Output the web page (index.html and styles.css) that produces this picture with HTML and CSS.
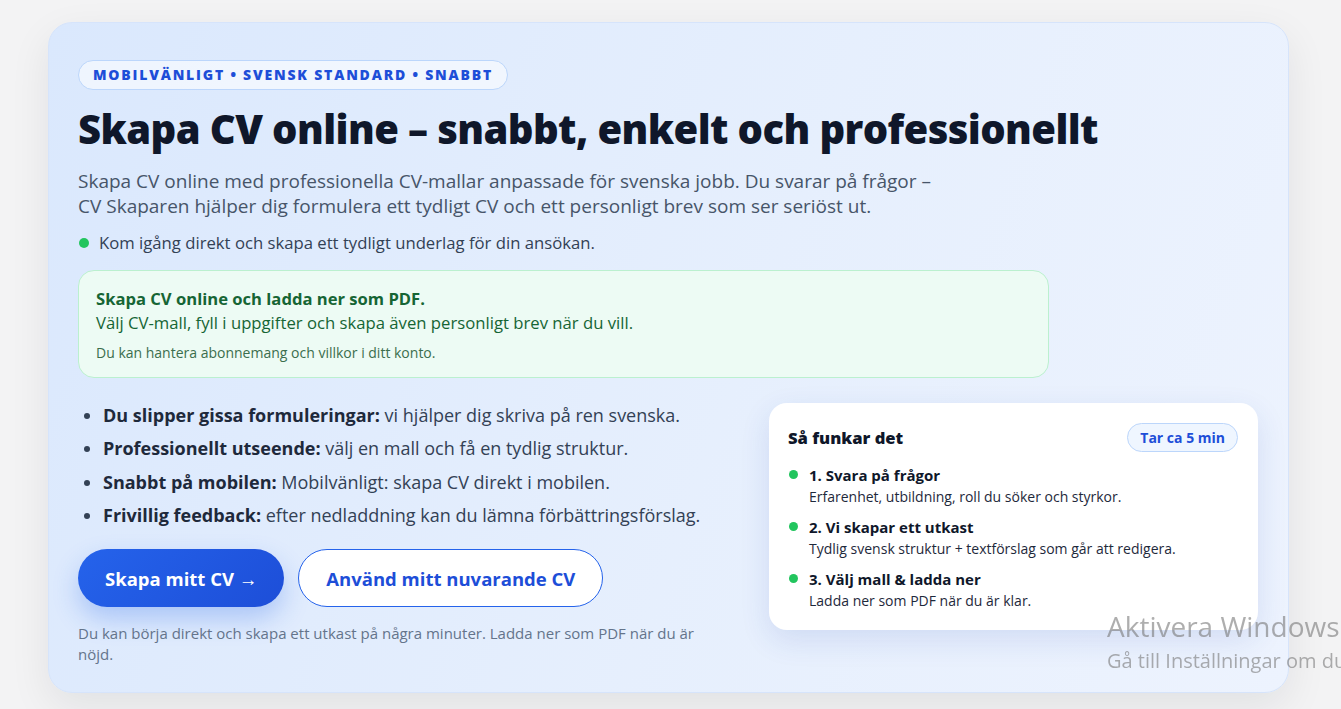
FILE: index.html
```html
<!DOCTYPE html>
<html lang="sv">
<head>
<meta charset="utf-8">
<title>Skapa CV online</title>
<link rel="stylesheet" href="styles.css">
</head>
<body>
<main class="hero">
  <div class="eyebrow">MOBILVÄNLIGT • SVENSK STANDARD • SNABBT</div>
  <h1 class="title">Skapa CV online – snabbt, enkelt och professionellt</h1>
  <p class="lead">Skapa CV online med professionella CV-mallar anpassade för svenska jobb. Du svarar på frågor – CV Skaparen hjälper dig formulera ett tydligt CV och ett personligt brev som ser seriöst ut.</p>
  <p class="status"><span class="dot"></span>Kom igång direkt och skapa ett tydligt underlag för din ansökan.</p>

  <div class="notice">
    <p class="notice-title">Skapa CV online och ladda ner som PDF.</p>
    <p class="notice-text">Välj CV-mall, fyll i uppgifter och skapa även personligt brev när du vill.</p>
    <p class="notice-small">Du kan hantera abonnemang och villkor i ditt konto.</p>
  </div>

  <div class="split">
    <div class="left">
      <ul class="benefits">
        <li><strong>Du slipper gissa formuleringar:</strong> vi hjälper dig skriva på ren svenska.</li>
        <li><strong>Professionellt utseende:</strong> välj en mall och få en tydlig struktur.</li>
        <li><strong>Snabbt på mobilen:</strong> Mobilvänligt: skapa CV direkt i mobilen.</li>
        <li><strong>Frivillig feedback:</strong> efter nedladdning kan du lämna förbättringsförslag.</li>
      </ul>
      <div class="actions">
        <a class="btn btn-primary" href="#">Skapa mitt CV →</a>
        <a class="btn btn-ghost" href="#">Använd mitt nuvarande CV</a>
      </div>
      <p class="hint">Du kan börja direkt och skapa ett utkast på några minuter. Ladda ner som PDF när du är nöjd.</p>
    </div>

    <aside class="how">
      <div class="how-head">
        <h2 class="how-title">Så funkar det</h2>
        <span class="pill">Tar ca 5 min</span>
      </div>
      <ol class="steps">
        <li class="step"><span class="dot"></span><div><p class="step-title">1. Svara på frågor</p><p class="step-text">Erfarenhet, utbildning, roll du söker och styrkor.</p></div></li>
        <li class="step"><span class="dot"></span><div><p class="step-title">2. Vi skapar ett utkast</p><p class="step-text">Tydlig svensk struktur + textförslag som går att redigera.</p></div></li>
        <li class="step"><span class="dot"></span><div><p class="step-title">3. Välj mall &amp; ladda ner</p><p class="step-text">Ladda ner som PDF när du är klar.</p></div></li>
      </ol>
    </aside>
  </div>
</main>

<div class="watermark">
  <div class="wm-big">Aktivera Windows</div>
  <div class="wm-small">Gå till Inställningar om du vill aktivera Windows.</div>
</div>
</body>
</html>
```

FILE: styles.css
```css
* { box-sizing: border-box; }
html, body { height: 100%; }
body {
  margin: 0;
  background: #f3f3f4;
  font-family: "Open Sans", "Noto Sans", sans-serif;
  color: #0f172a;
  overflow: hidden;
}
p { margin: 0; }

.hero {
  width: 1241px;
  margin: 22px 0 0 48px;
  padding: 37px 30px 27px 29px;
  border-radius: 24px;
  border: 1px solid #d6e4fb;
  background: linear-gradient(110deg, #dae8fd 0%, #e6effd 55%, #edf3fe 100%);
  box-shadow: 0 14px 40px rgba(15, 23, 42, 0.08);
}

.eyebrow {
  display: inline-block;
  padding: 5px 14px;
  border-radius: 999px;
  border: 1px solid #bcd6fb;
  background: rgba(255, 255, 255, 0.55);
  color: #1d4ed8;
  font-size: 14px;
  font-weight: 800;
  letter-spacing: 1.8px;
  line-height: 18px;
}

.title {
  margin: 14px 0 0;
  font-size: 40px;
  line-height: 50px;
  font-weight: 800;
  letter-spacing: -0.6px;
  color: #0f172a;
}

.lead {
  margin-top: 15px;
  max-width: 870px;
  font-size: 19px;
  line-height: 25px;
  color: #475569;
}

.status {
  margin-top: 13px;
  display: flex;
  align-items: center;
  gap: 10px;
  font-size: 16.7px;
  line-height: 22px;
  color: #334155;
}
.status .dot { margin-left: 1px; }

.dot {
  width: 10px;
  height: 10px;
  border-radius: 50%;
  background: #22c55e;
  flex: none;
}

.notice {
  margin-top: 16px;
  max-width: 971px;
  padding: 16px 17px 15px;
  border-radius: 16px;
  border: 1px solid #bbf0cf;
  background: #edfbf4;
}
.notice-title {
  font-size: 16.6px;
  font-weight: 700;
  line-height: 24px;
  color: #166534;
}
.notice-text {
  font-size: 16.7px;
  line-height: 24px;
  color: #166534;
}
.notice-small {
  margin-top: 8px;
  font-size: 14px;
  line-height: 19px;
  color: #3b6e4d;
}

.split {
  margin-top: 21px;
  display: grid;
  grid-template-columns: 1fr 489px;
  gap: 50px;
  align-items: start;
}

.benefits {
  margin: 0;
  padding-left: 25px;
  font-size: 18px;
  line-height: 33.3px;
  color: #334155;
}
.benefits strong { color: #1e293b; font-weight: 700; }

.actions {
  margin-top: 17px;
  display: flex;
  gap: 14px;
}
.btn {
  display: inline-flex;
  align-items: center;
  justify-content: center;
  height: 58px;
  padding: 0 27px;
  border-radius: 999px;
  font-size: 18.5px;
  font-weight: 700;
  text-decoration: none;
}
.btn-primary {
  background: linear-gradient(135deg, #2563eb, #1d4ed8);
  color: #ffffff;
  box-shadow: 0 12px 26px rgba(37, 99, 235, 0.28);
}
.btn-ghost {
  background: #ffffff;
  color: #1d4ed8;
  border: 1px solid #2563eb;
}

.hint {
  margin-top: 16px;
  font-size: 15px;
  line-height: 21px;
  color: #64748b;
}

.how {
  margin-top: 4px;
  padding: 20px 20px 19px 19px;
  border-radius: 18px;
  background: #ffffff;
  box-shadow: 0 10px 30px rgba(30, 64, 175, 0.12);
}
.how-head {
  display: flex;
  align-items: center;
  justify-content: space-between;
}
.how-title {
  margin: 0;
  font-size: 16.6px;
  font-weight: 800;
  color: #0f172a;
}
.pill {
  padding: 4px 12px;
  border-radius: 999px;
  border: 1px solid #bcd6fb;
  background: #eff6ff;
  color: #1d4ed8;
  font-size: 14px;
  font-weight: 700;
  line-height: 19px;
}

.steps {
  list-style: none;
  margin: 13px 0 0;
  padding: 0;
  display: flex;
  flex-direction: column;
  gap: 10px;
}
.step {
  display: flex;
  gap: 11px;
  align-items: flex-start;
}
.step .dot {
  width: 9px;
  height: 9px;
  margin-top: 5px;
  margin-left: 1px;
}
.step-title {
  font-size: 15px;
  font-weight: 700;
  line-height: 21px;
  color: #0f172a;
}
.step-text {
  font-size: 14px;
  line-height: 21px;
  color: #1e293b;
}

.watermark {
  position: fixed;
  left: 1107px;
  top: 607px;
  white-space: nowrap;
  color: rgba(120, 120, 120, 0.6);
  pointer-events: none;
}
.wm-big { font-size: 28px; line-height: 38px; }
.wm-small { font-size: 20px; line-height: 26px; margin-top: 3px; }
```
